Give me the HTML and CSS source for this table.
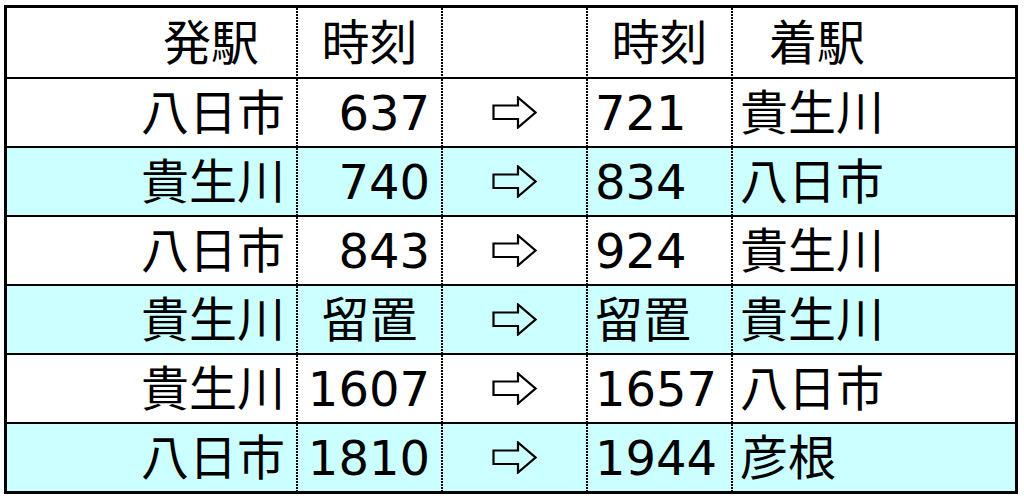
FILE: index.html
```html
<!DOCTYPE html>
<html lang="ja">
<head>
<meta charset="utf-8">
<title>時刻表</title>
<link rel="stylesheet" href="styles.css">
</head>
<body>
<div class="table">
  <div class="row head">
    <div class="cell c1 hdr-from">発駅</div>
    <div class="cell c2 center">時刻</div>
    <div class="cell c3"></div>
    <div class="cell c4 center">時刻</div>
    <div class="cell c5 hdr-to">着駅</div>
  </div>
  <div class="row">
    <div class="cell c1">八日市</div>
    <div class="cell c2">637</div>
    <div class="cell c3"><svg class="arrow" viewBox="0 0 45 33" width="45" height="33"><path d="M1.5 9.5 H26 V1.5 L43.5 16.5 L26 31.5 V23 H1.5 Z"/></svg></div>
    <div class="cell c4">721</div>
    <div class="cell c5">貴生川</div>
  </div>
  <div class="row alt">
    <div class="cell c1">貴生川</div>
    <div class="cell c2">740</div>
    <div class="cell c3"><svg class="arrow" viewBox="0 0 45 33" width="45" height="33"><path d="M1.5 9.5 H26 V1.5 L43.5 16.5 L26 31.5 V23 H1.5 Z"/></svg></div>
    <div class="cell c4">834</div>
    <div class="cell c5">八日市</div>
  </div>
  <div class="row">
    <div class="cell c1">八日市</div>
    <div class="cell c2">843</div>
    <div class="cell c3"><svg class="arrow" viewBox="0 0 45 33" width="45" height="33"><path d="M1.5 9.5 H26 V1.5 L43.5 16.5 L26 31.5 V23 H1.5 Z"/></svg></div>
    <div class="cell c4">924</div>
    <div class="cell c5">貴生川</div>
  </div>
  <div class="row alt">
    <div class="cell c1">貴生川</div>
    <div class="cell c2 center">留置</div>
    <div class="cell c3"><svg class="arrow" viewBox="0 0 45 33" width="45" height="33"><path d="M1.5 9.5 H26 V1.5 L43.5 16.5 L26 31.5 V23 H1.5 Z"/></svg></div>
    <div class="cell c4">留置</div>
    <div class="cell c5">貴生川</div>
  </div>
  <div class="row">
    <div class="cell c1">貴生川</div>
    <div class="cell c2">1607</div>
    <div class="cell c3"><svg class="arrow" viewBox="0 0 45 33" width="45" height="33"><path d="M1.5 9.5 H26 V1.5 L43.5 16.5 L26 31.5 V23 H1.5 Z"/></svg></div>
    <div class="cell c4">1657</div>
    <div class="cell c5">八日市</div>
  </div>
  <div class="row alt">
    <div class="cell c1">八日市</div>
    <div class="cell c2">1810</div>
    <div class="cell c3"><svg class="arrow" viewBox="0 0 45 33" width="45" height="33"><path d="M1.5 9.5 H26 V1.5 L43.5 16.5 L26 31.5 V23 H1.5 Z"/></svg></div>
    <div class="cell c4">1944</div>
    <div class="cell c5">彦根</div>
  </div>
</div>
</body>
</html>
```
FILE: styles.css
```css
html, body {
  margin: 0;
  padding: 0;
  background: #ffffff;
}

body {
  padding: 5px 0 0 4px;
  font-family: "DejaVu Sans", "Noto Sans CJK JP", sans-serif;
  font-size: 48px;
  color: #000;
}

.table {
  width: 1014px;
  box-sizing: border-box;
  border: 3px solid #000;
  display: flex;
  flex-direction: column;
}

.row {
  display: grid;
  grid-template-columns: 289px 145px 145px 145px 284px;
  height: 69px;
  box-sizing: border-box;
  background: #ffffff;
}

.row + .row {
  border-top: 2px solid #000;
}

.row.alt {
  background: #ccffff;
}

.cell {
  box-sizing: border-box;
  display: flex;
  align-items: center;
  white-space: nowrap;
  line-height: 1;
}

.cell + .cell {
  border-left: 2px solid transparent;
  background-image: repeating-linear-gradient(to bottom, #000 0, #000 2px, transparent 2px, transparent 3px);
  background-size: 2px 100%;
  background-repeat: no-repeat;
  background-position: left top;
  background-origin: border-box;
}

.c1, .c2 {
  justify-content: flex-end;
  padding-right: 11px;
}

.c3 {
  justify-content: center;
}

.c4, .c5 {
  justify-content: flex-start;
  padding-left: 7px;
}

.cell.center {
  justify-content: center;
  padding: 0;
}

.hdr-from {
  padding-right: 37px;
}

.hdr-to {
  padding-left: 36px;
}

.arrow {
  display: block;
}

.arrow path {
  fill: none;
  stroke: #000;
  stroke-width: 2.2;
  stroke-linejoin: miter;
}
```
